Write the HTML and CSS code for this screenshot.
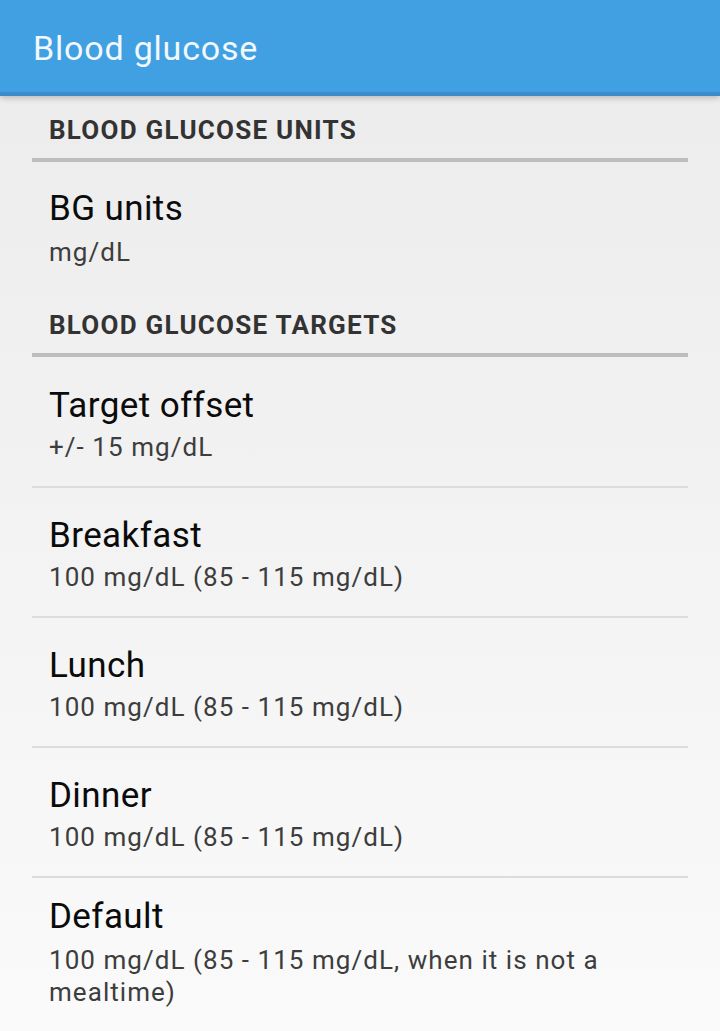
FILE: index.html
```html
<!DOCTYPE html>
<html lang="en">
<head>
<meta charset="utf-8">
<title>Blood glucose</title>
<link rel="stylesheet" href="styles.css">
</head>
<body>
<header class="appbar">
  <h1 class="appbar-title">Blood glucose</h1>
</header>
<main class="prefs">
  <section class="cat">
    <h2 class="cat-title">BLOOD GLUCOSE UNITS</h2>
    <div class="item item-single">
      <div class="item-title">BG units</div>
      <div class="item-summary">mg/dL</div>
    </div>
  </section>
  <section class="cat">
    <h2 class="cat-title">BLOOD GLUCOSE TARGETS</h2>
    <div class="item item-first">
      <div class="item-title">Target offset</div>
      <div class="item-summary">+/- 15 mg/dL</div>
    </div>
    <div class="item">
      <div class="item-title">Breakfast</div>
      <div class="item-summary">100 mg/dL (85 - 115 mg/dL)</div>
    </div>
    <div class="item">
      <div class="item-title">Lunch</div>
      <div class="item-summary">100 mg/dL (85 - 115 mg/dL)</div>
    </div>
    <div class="item">
      <div class="item-title">Dinner</div>
      <div class="item-summary">100 mg/dL (85 - 115 mg/dL)</div>
    </div>
    <div class="item item-multi">
      <div class="item-title">Default</div>
      <div class="item-summary">100 mg/dL (85 - 115 mg/dL, when it is not a mealtime)</div>
    </div>
  </section>
</main>
</body>
</html>
```

FILE: styles.css
```css
html, body {
  margin: 0;
  padding: 0;
}
body {
  width: 720px;
  min-height: 1031px;
  overflow: hidden;
  font-family: Roboto, "Noto Sans", sans-serif;
  background: linear-gradient(to bottom, #ebebeb 0%, #fafafa 100%);
}
.appbar {
  height: 92px;
  background: #40a0e1;
  border-bottom: 4px solid #3a8ccb;
  box-shadow: 0 2px 6px rgba(0, 0, 0, 0.22);
  display: flex;
  align-items: center;
  padding-left: 33px;
  position: relative;
  z-index: 1;
}
.appbar-title {
  margin: 0;
  font-size: 34px;
  font-weight: 400;
  letter-spacing: 0.8px;
  color: #f2f8fd;
  line-height: 40px;
  padding-top: 4px;
}
.prefs {
  padding: 0 32px;
  display: flex;
  flex-direction: column;
}
.cat {
  display: flex;
  flex-direction: column;
}
.cat-title {
  margin: 0;
  padding: 18px 17px 12px;
  font-size: 26px;
  font-weight: 700;
  letter-spacing: 1.25px;
  line-height: 32px;
  color: #333333;
  border-bottom: 4px solid #bdbdbd;
}
.item {
  padding: 27px 17px 23px;
  display: flex;
  flex-direction: column;
  gap: 4px;
  border-bottom: 2px solid #dcdcdc;
}
.item-single {
  padding: 26px 17px 23px;
  gap: 6px;
  border-bottom: none;
}
.item-first {
  padding-top: 28px;
  padding-bottom: 23px;
}
.item-multi {
  padding-top: 18px;
  gap: 6px;
  border-bottom: none;
}
.item-title {
  font-size: 35px;
  line-height: 42px;
  letter-spacing: 0.4px;
  color: #0b0b0b;
}
.item-summary {
  font-size: 26px;
  line-height: 32px;
  letter-spacing: 1.05px;
  color: #3d3d3d;
}
```
